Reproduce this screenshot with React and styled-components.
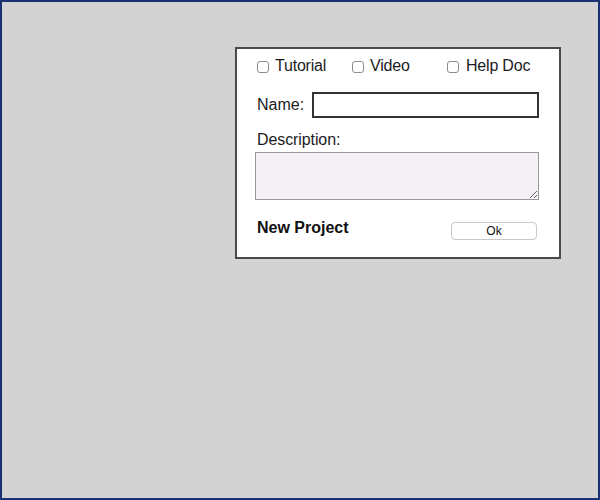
import React from "react";
import styled, { createGlobalStyle } from "styled-components";

const Global = createGlobalStyle`
  html, body { margin: 0; padding: 0; }
  body { font-family: "Liberation Sans", Arial, sans-serif; }
`;

const Page = styled.div`
  box-sizing: border-box;
  width: 600px;
  height: 500px;
  border: 2px solid #1b2f73;
  background: #d3d3d3;
  display: flex;
  justify-content: flex-end;
  align-items: flex-start;
  padding: 45px 37px 0 0;
`;

const Dialog = styled.div`
  box-sizing: border-box;
  width: 326px;
  height: 212px;
  border: 2px solid #4a4a4a;
  background: #fff;
  padding: 8px 20px 0 20px;
  color: #1c1c1c;
  font-size: 16px;
`;

const OptionRow = styled.div`
  display: grid;
  grid-template-columns: 95px 95px 1fr;
  height: 16px;
  align-items: center;
`;

const Option = styled.label`
  display: flex;
  align-items: center;
  gap: ${(p) => p.$gap || 6}px;
  letter-spacing: -0.2px;
`;

const Box = styled.span`
  box-sizing: border-box;
  width: 12px;
  height: 12px;
  border: 1px solid #8c8c8c;
  border-radius: 3px;
  background: #fff;
  margin-top: 2px;
`;

const NameRow = styled.div`
  display: flex;
  align-items: center;
  margin-top: 19px;
  height: 26px;
  gap: 8px;
`;

const Label = styled.span``;

const NameInput = styled.input`
  box-sizing: border-box;
  width: 227px;
  height: 26px;
  border: 2px solid #333;
  margin: 0;
  padding: 0 4px;
  background: #fff;
  outline: none;
`;

const DescLabel = styled.div`
  margin-top: 13px;
  line-height: 18px;
  letter-spacing: -0.1px;
`;

const TextArea = styled.textarea`
  display: block;
  box-sizing: border-box;
  width: 284px;
  height: 48px;
  margin: 3px 0 0 -2px;
  border: 1px solid #999;
  background: #f4f0f6;
  resize: both;
  outline: none;
`;

const Footer = styled.div`
  display: flex;
  justify-content: space-between;
  align-items: center;
  margin-top: 16px;
  padding-right: 2px;
`;

const Title = styled.span`
  font-weight: bold;
  font-size: 16px;
  color: #111;
`;

const OkButton = styled.button`
  box-sizing: border-box;
  width: 86px;
  height: 18px;
  margin-top: 6px;
  border: 1px solid #c8c8c8;
  border-radius: 4px;
  background: #fff;
  font-family: "Liberation Sans", Arial, sans-serif;
  font-size: 12px;
  color: #111;
  padding: 0;
`;

export default function App() {
  return (
    <>
      <Global />
      <Page>
        <Dialog>
          <OptionRow>
            <Option>
              <Box />
              Tutorial
            </Option>
            <Option>
              <Box />
              Video
            </Option>
            <Option $gap={7}>
              <Box />
              Help Doc
            </Option>
          </OptionRow>
          <NameRow>
            <Label>Name:</Label>
            <NameInput />
          </NameRow>
          <DescLabel>Description:</DescLabel>
          <TextArea />
          <Footer>
            <Title>New Project</Title>
            <OkButton>Ok</OkButton>
          </Footer>
        </Dialog>
      </Page>
    </>
  );
}
